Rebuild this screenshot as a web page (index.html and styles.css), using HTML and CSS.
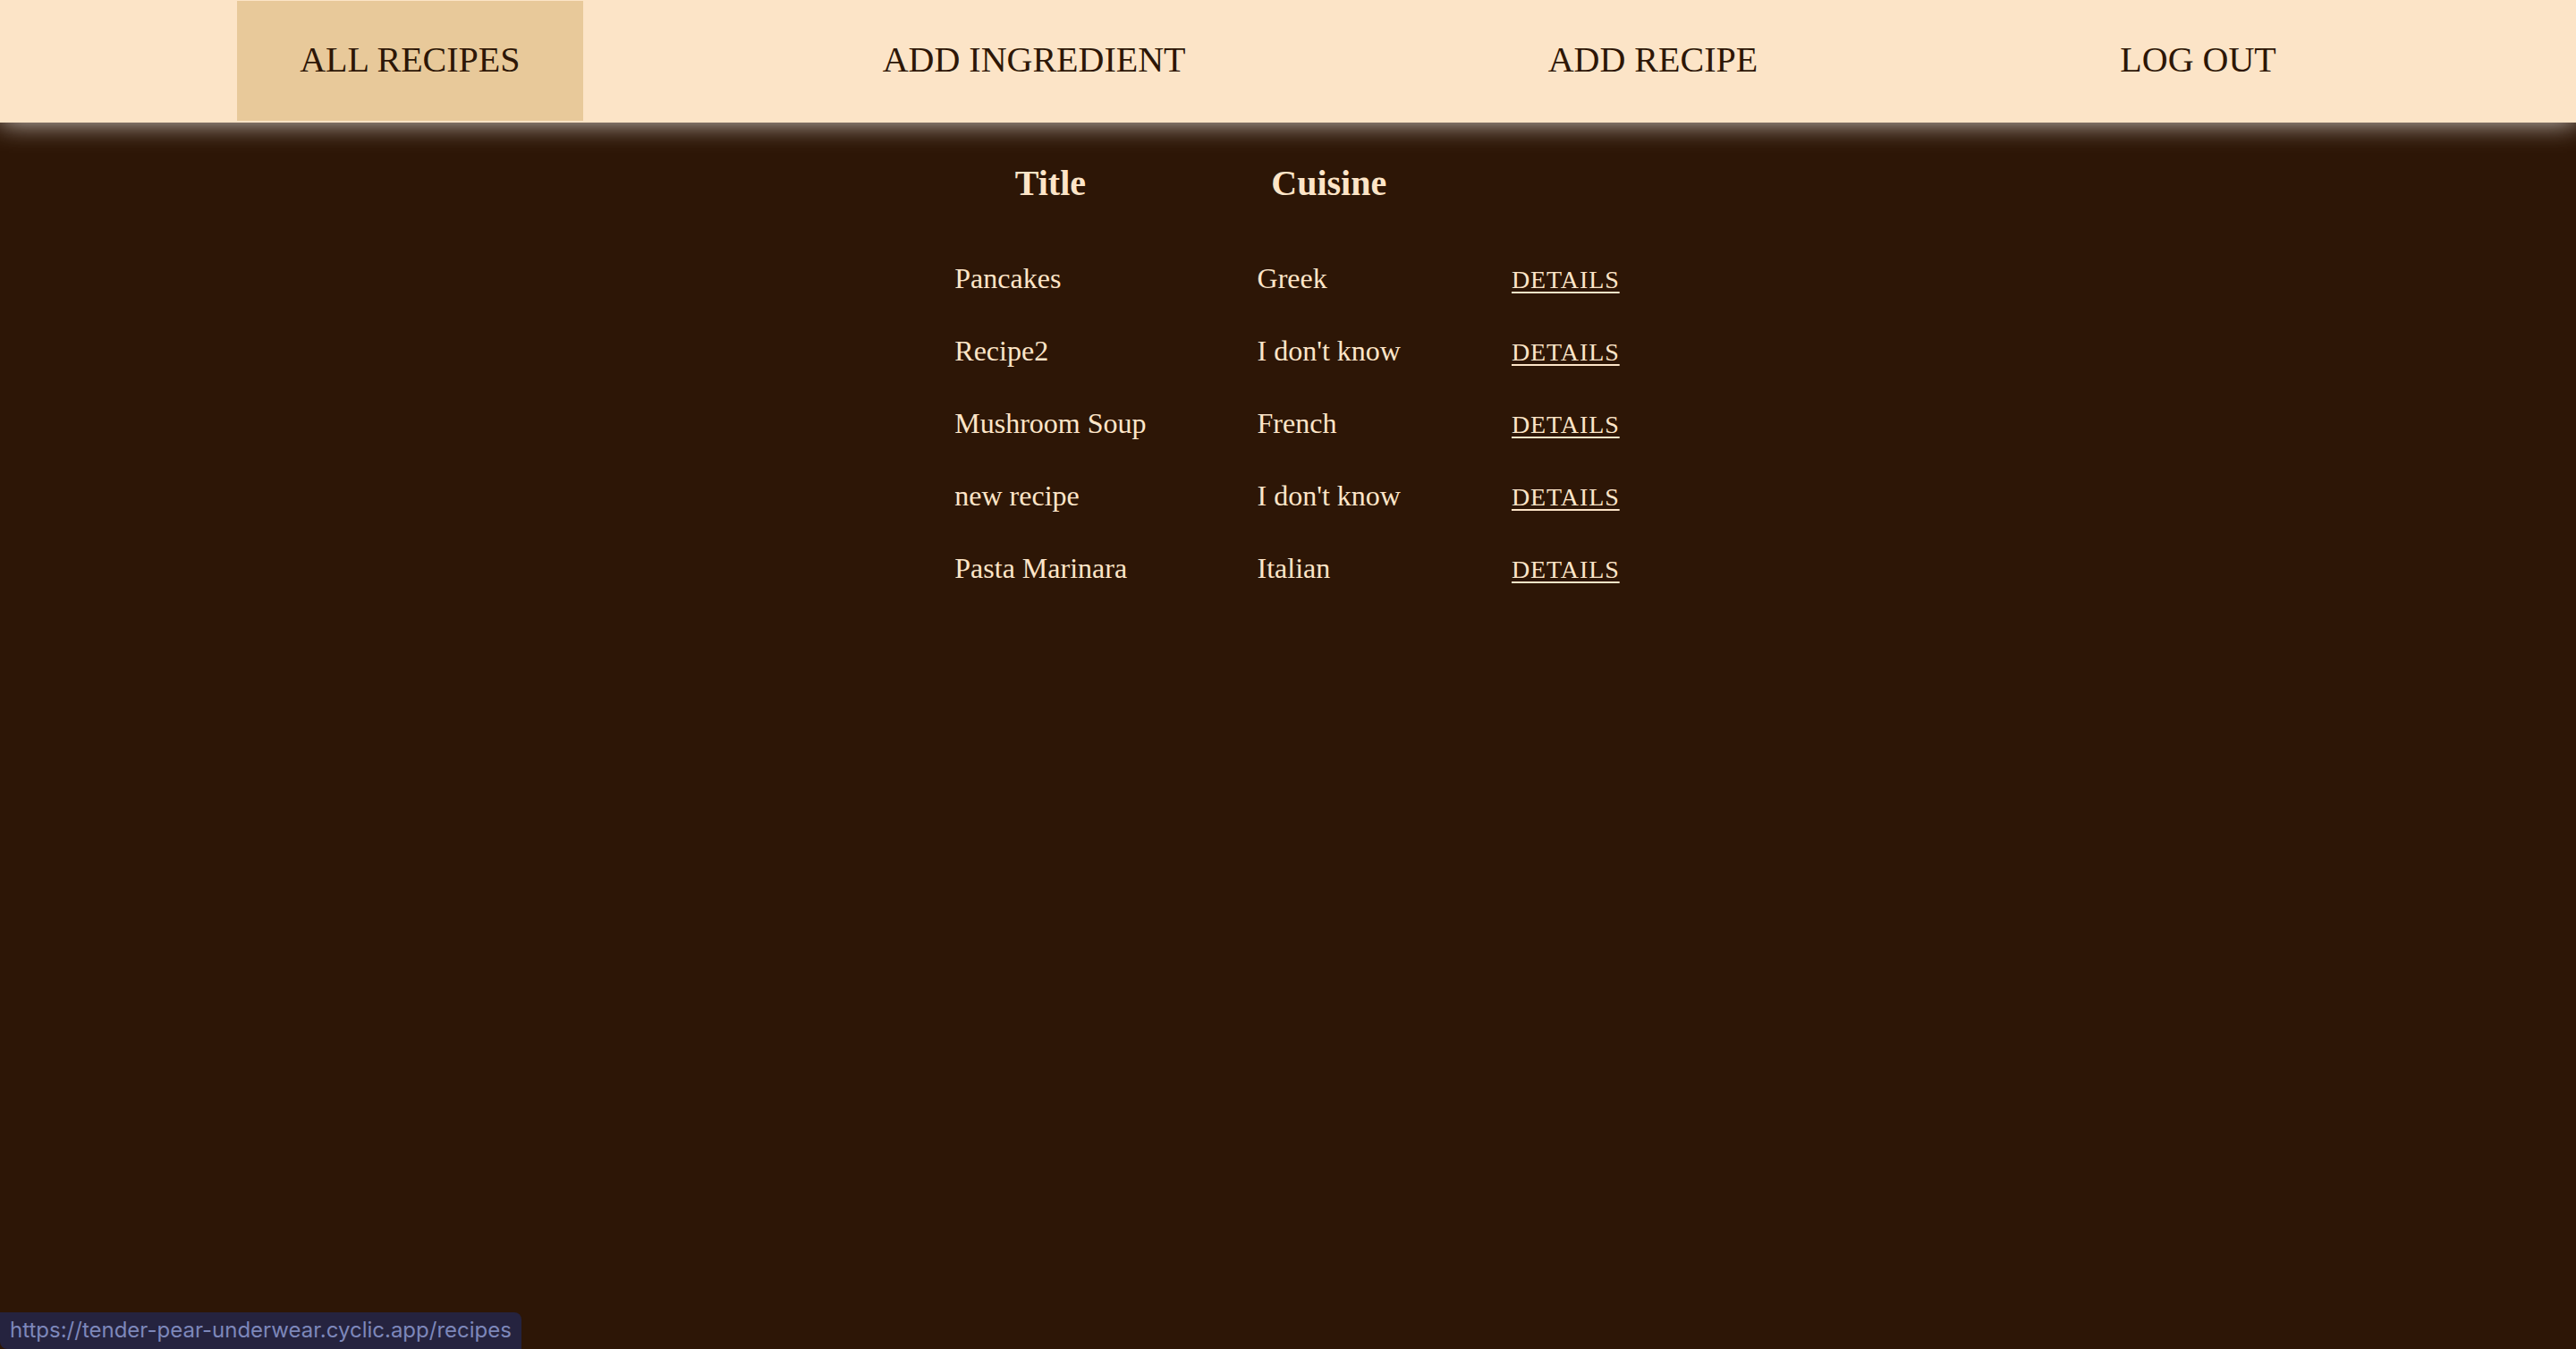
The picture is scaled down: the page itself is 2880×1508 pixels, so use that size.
FILE: index.html
```html
<!DOCTYPE html>
<html lang="en">
<head>
<meta charset="utf-8">
<title>Recipes</title>
<link rel="stylesheet" href="styles.css">
</head>
<body>
<nav class="nav">
  <a class="nav-link active" href="#">ALL RECIPES</a>
  <a class="nav-link" href="#">ADD INGREDIENT</a>
  <a class="nav-link" href="#">ADD RECIPE</a>
  <a class="nav-link" href="#">LOG OUT</a>
</nav>
<main class="main">
  <table class="recipes">
    <thead>
      <tr><th>Title</th><th>Cuisine</th><th></th></tr>
    </thead>
    <tbody>
      <tr><td>Pancakes</td><td>Greek</td><td><a class="details" href="#">DETAILS</a></td></tr>
      <tr><td>Recipe2</td><td>I don't know</td><td><a class="details" href="#">DETAILS</a></td></tr>
      <tr><td>Mushroom Soup</td><td>French</td><td><a class="details" href="#">DETAILS</a></td></tr>
      <tr><td>new recipe</td><td>I don't know</td><td><a class="details" href="#">DETAILS</a></td></tr>
      <tr><td>Pasta Marinara</td><td>Italian</td><td><a class="details" href="#">DETAILS</a></td></tr>
    </tbody>
  </table>
</main>
<div class="status-bubble">https://tender-pear-underwear.cyclic.app/recipes</div>
</body>
</html>
```
FILE: styles.css
```css
html, body {
  margin: 0;
  padding: 0;
}
body {
  background: #2d1606;
  font-family: "Liberation Serif", "Times New Roman", serif;
  color: #fde5c8;
  min-height: 1508px;
}
.nav {
  display: flex;
  justify-content: space-evenly;
  align-items: stretch;
  height: 137px;
  box-sizing: border-box;
  padding: 1px 0 2px;
  background: #fce4c7;
  box-shadow: 0 0 28px rgba(255, 255, 255, 0.78);
  position: relative;
  z-index: 1;
}
.nav-link {
  display: flex;
  align-items: center;
  padding: 0 70px 3px;
  font-size: 40px;
  color: #2d1606;
  text-decoration: none;
}
.nav-link.active {
  background: #e8c99a;
}
.main {
  padding-top: 20px;
}
.recipes {
  margin: 0 auto;
  border-spacing: 4px;
  position: relative;
  left: -1px;
}
.recipes th {
  font-size: 40px;
  font-weight: bold;
  padding: 20px 60px 41px;
  text-align: center;
}
.recipes td {
  font-size: 32px;
  padding: 20px 60px;
  text-align: left;
  white-space: nowrap;
}
.details {
  color: #fde5c8;
  font-size: 28px;
  letter-spacing: 0.9px;
  text-decoration: underline;
  text-decoration-thickness: 2px;
  text-underline-offset: 4px;
}
.status-bubble {
  position: fixed;
  left: 0;
  bottom: 0;
  width: 583px;
  height: 41px;
  box-sizing: border-box;
  padding: 0 0 0 11px;
  background: #25233f;
  color: #7d87ba;
  font-family: Inter, "Liberation Sans", sans-serif;
  font-size: 24px;
  line-height: 40px;
  border-radius: 0 8px 0 8px;
  white-space: nowrap;
}
```
